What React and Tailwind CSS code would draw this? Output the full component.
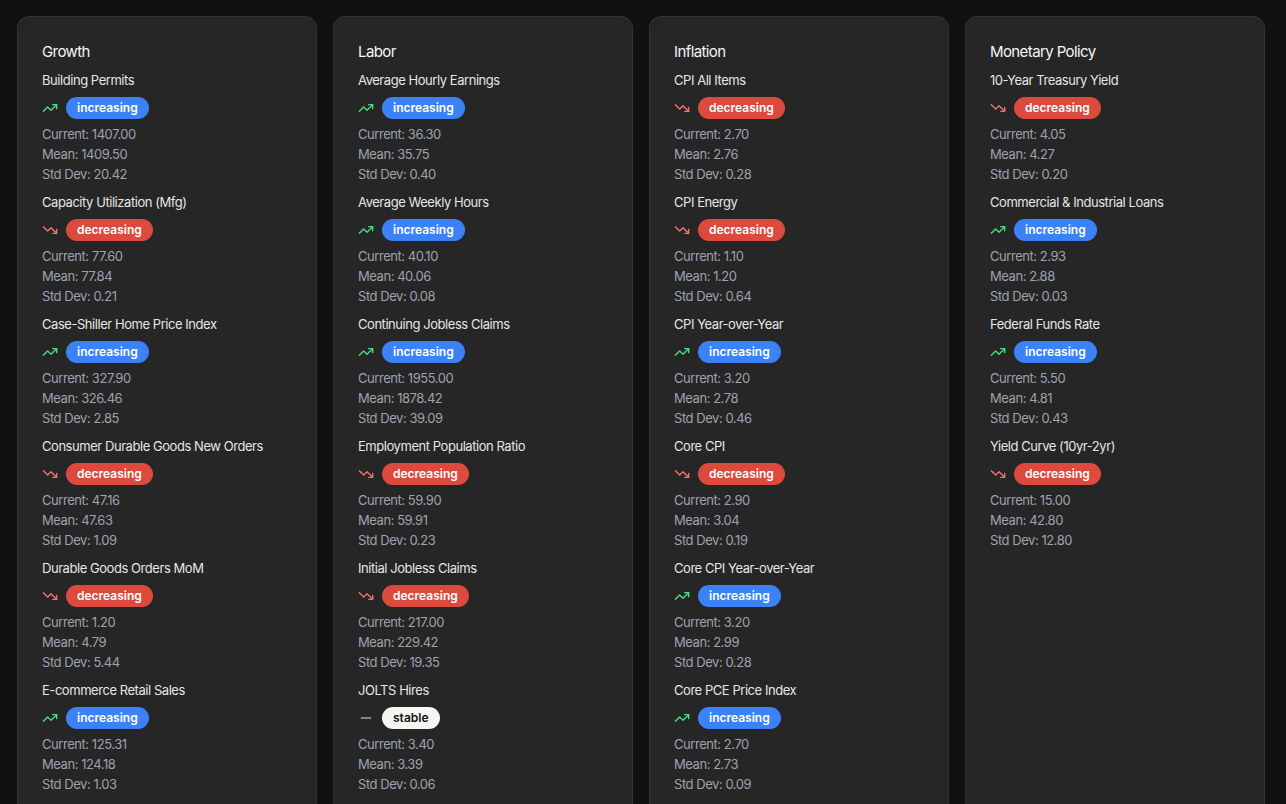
import React from "react";
import { TrendingUp, TrendingDown, Minus } from "lucide-react";

const data = [
  {
    title: "Growth",
    items: [
      ["Building Permits", "increasing", "1407.00", "1409.50", "20.42"],
      ["Capacity Utilization (Mfg)", "decreasing", "77.60", "77.84", "0.21"],
      ["Case-Shiller Home Price Index", "increasing", "327.90", "326.46", "2.85"],
      ["Consumer Durable Goods New Orders", "decreasing", "47.16", "47.63", "1.09"],
      ["Durable Goods Orders MoM", "decreasing", "1.20", "4.79", "5.44"],
      ["E-commerce Retail Sales", "increasing", "125.31", "124.18", "1.03"],
    ],
  },
  {
    title: "Labor",
    items: [
      ["Average Hourly Earnings", "increasing", "36.30", "35.75", "0.40"],
      ["Average Weekly Hours", "increasing", "40.10", "40.06", "0.08"],
      ["Continuing Jobless Claims", "increasing", "1955.00", "1878.42", "39.09"],
      ["Employment Population Ratio", "decreasing", "59.90", "59.91", "0.23"],
      ["Initial Jobless Claims", "decreasing", "217.00", "229.42", "19.35"],
      ["JOLTS Hires", "stable", "3.40", "3.39", "0.06"],
    ],
  },
  {
    title: "Inflation",
    items: [
      ["CPI All Items", "decreasing", "2.70", "2.76", "0.28"],
      ["CPI Energy", "decreasing", "1.10", "1.20", "0.64"],
      ["CPI Year-over-Year", "increasing", "3.20", "2.78", "0.46"],
      ["Core CPI", "decreasing", "2.90", "3.04", "0.19"],
      ["Core CPI Year-over-Year", "increasing", "3.20", "2.99", "0.28"],
      ["Core PCE Price Index", "increasing", "2.70", "2.73", "0.09"],
    ],
  },
  {
    title: "Monetary Policy",
    items: [
      ["10-Year Treasury Yield", "decreasing", "4.05", "4.27", "0.20"],
      ["Commercial & Industrial Loans", "increasing", "2.93", "2.88", "0.03"],
      ["Federal Funds Rate", "increasing", "5.50", "4.81", "0.43"],
      ["Yield Curve (10yr-2yr)", "decreasing", "15.00", "42.80", "12.80"],
    ],
  },
];

function Trend({ trend }) {
  if (trend === "increasing") {
    return (
      <div className="flex items-center gap-2">
        <TrendingUp size={16} strokeWidth={2} className="text-[#4ade80]" />
        <span className="rounded-full bg-[#3b82f6] px-[11px] h-[22px] flex items-center text-[12px] font-semibold text-white">
          increasing
        </span>
      </div>
    );
  }
  if (trend === "decreasing") {
    return (
      <div className="flex items-center gap-2">
        <TrendingDown size={16} strokeWidth={2} className="text-[#f87171]" />
        <span className="rounded-full bg-[#dc4a3e] px-[11px] h-[22px] flex items-center text-[12px] font-semibold text-white">
          decreasing
        </span>
      </div>
    );
  }
  return (
    <div className="flex items-center gap-2">
      <Minus size={16} strokeWidth={2} className="text-[#9ca3af]" />
      <span className="rounded-full bg-[#f5f5f2] px-[11px] h-[22px] flex items-center text-[12px] font-semibold text-[#111]">
        stable
      </span>
    </div>
  );
}

export default function App() {
  return (
    <div
      className="min-h-screen bg-[#111111] pt-4 pl-[17px] pb-4"
      style={{ fontFamily: "Inter, 'Noto Sans', sans-serif" }}
    >
      <div className="flex gap-4 items-stretch">
        {data.map((col) => (
          <div
            key={col.title}
            className="w-[300px] shrink-0 rounded-xl border border-[#333333] bg-[#262626] px-6 pt-[25px] pb-6"
          >
            <h2 className="text-[15px] leading-5 tracking-[-0.6px] text-[#f5f5f5] mb-[8px]">{col.title}</h2>
            <div className="flex flex-col gap-[8px] tracking-[-0.45px]">
              {col.items.map(([name, trend, cur, mean, sd]) => (
                <div key={name} className="flex flex-col">
                  <div className="text-[13px] leading-5 text-[#e5e5e5]">{name}</div>
                  <div className="mt-[7px] mb-[5px] tracking-normal">
                    <Trend trend={trend} />
                  </div>
                  <div className="text-[13px] leading-5 text-[#9ca3af]">Current: {cur}</div>
                  <div className="text-[13px] leading-5 text-[#9ca3af]">Mean: {mean}</div>
                  <div className="text-[13px] leading-5 text-[#9ca3af]">Std Dev: {sd}</div>
                </div>
              ))}
            </div>
          </div>
        ))}
      </div>
    </div>
  );
}
